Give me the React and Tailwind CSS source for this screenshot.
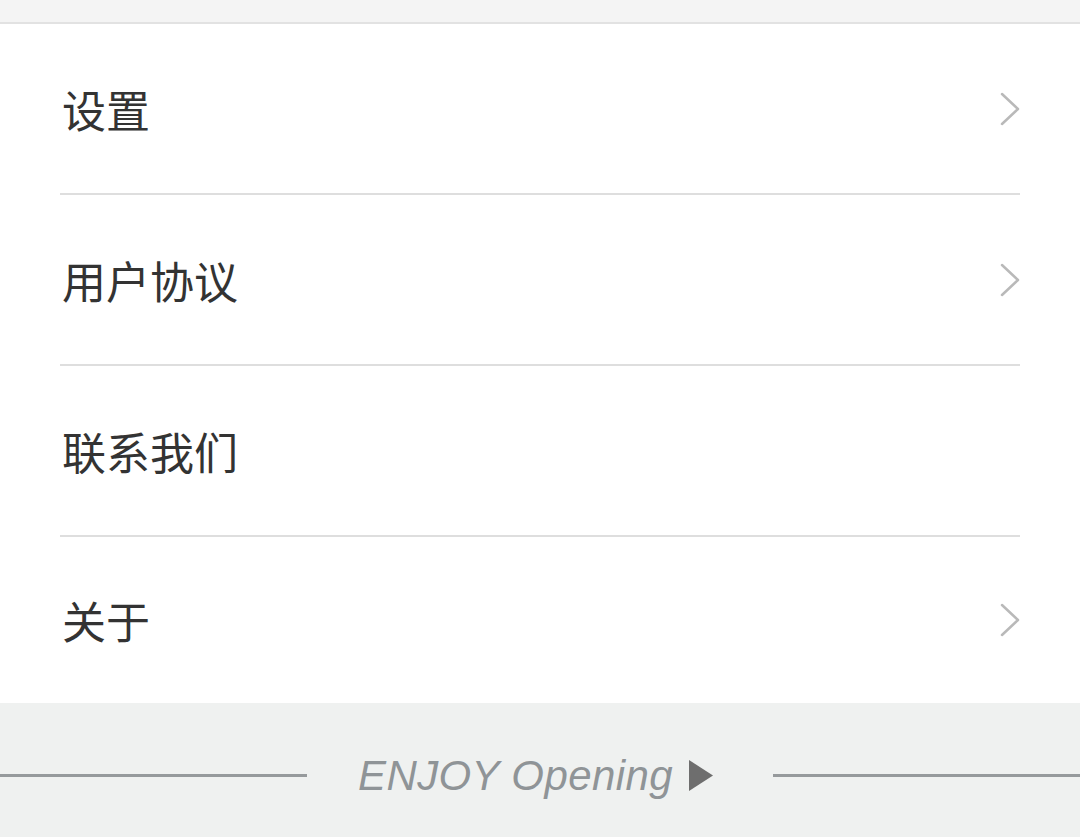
const items = [
  { label: '设置', arrow: true, h: 'h-[171px]' },
  { label: '用户协议', arrow: true, h: 'h-[171px]' },
  { label: '联系我们', arrow: false, h: 'h-[171px]' },
  { label: '关于', arrow: true, h: 'h-[166px]' },
]

function Chevron() {
  return (
    <svg width="20" height="34" viewBox="0 0 20 34" fill="none">
      <path d="M2 2 L18 17 L2 32" stroke="#b9b9b9" strokeWidth="2.5" strokeLinecap="round" strokeLinejoin="round" />
    </svg>
  )
}

export default function App() {
  return (
    <div className="w-[1080px] h-[837px] overflow-hidden bg-white flex flex-col font-['Noto_Sans_CJK_SC','Noto_Sans',sans-serif]">
      <div className="h-[24px] bg-[#f4f4f4] border-b-2 border-[#e2e2e2] shrink-0" />
      <div className="px-[60px] bg-white">
        {items.map((it, i) => (
          <div
            key={it.label}
            className={`${it.h} flex items-center justify-between ${i < items.length - 1 ? 'border-b-2 border-[#dedede]' : ''}`}
          >
            <span className="text-[44px] leading-none text-[#333333] pl-[2px]">{it.label}</span>
            {it.arrow ? <Chevron /> : null}
          </div>
        ))}
      </div>
      <div className="flex-1 bg-[#eff1f0] flex items-center pt-[11px]">
        <div className="w-[307px] h-[3px] bg-[#969a9c]" />
        <span className="ml-[51px] text-[42px] italic leading-none tracking-[0.4px] text-[#8f9497] font-['Liberation_Sans',Arial,sans-serif]">
          ENJOY Opening
        </span>
        <svg className="ml-[16px]" width="24" height="31" viewBox="0 0 24 31">
          <path d="M0 0 L24 15.5 L0 31 Z" fill="#6e6e6e" />
        </svg>
        <div className="ml-[60px] flex-1 h-[3px] bg-[#969a9c]" />
      </div>
    </div>
  )
}
